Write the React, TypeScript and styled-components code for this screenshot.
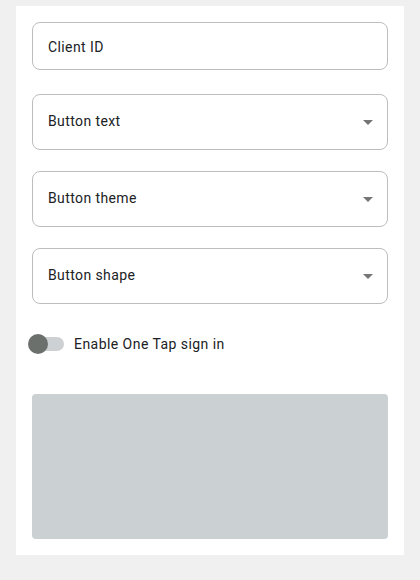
import React from "react";
import styled, { createGlobalStyle } from "styled-components";

const Global = createGlobalStyle`
  html, body { margin: 0; padding: 0; background: #f0f0f0; }
  body { font-family: Roboto, "Noto Sans", Arial, sans-serif; }
`;

const Page = styled.div`
  padding: 6px 16px 0 16px;
`;

const Panel = styled.div`
  background: #ffffff;
  padding: 16px;
  display: flex;
  flex-direction: column;
`;

const Field = styled.div<{ $h: number; $mt: number }>`
  box-sizing: border-box;
  height: ${(p) => p.$h}px;
  margin-top: ${(p) => p.$mt}px;
  border: 1px solid #bdbdbd;
  border-radius: 8px;
  display: flex;
  align-items: center;
  padding: 0 15px;
  font-size: 14px;
  color: #202124;
  letter-spacing: 0.4px;
`;

const Label = styled.span<{ $shift: number }>`
  flex: 1;
  position: relative;
  top: ${(p) => p.$shift}px;
`;

const Arrow = styled.span`
  width: 0;
  height: 0;
  border-left: 5px solid transparent;
  border-right: 5px solid transparent;
  border-top: 5px solid #757575;
  margin-right: -1px;
`;

const ToggleRow = styled.div`
  margin-top: 30px;
  display: flex;
  align-items: center;
  margin-left: -4px;
  height: 20px;
`;

const Switch = styled.div`
  position: relative;
  width: 36px;
  height: 20px;
  display: flex;
  align-items: center;
`;

const Track = styled.div`
  margin-left: 2px;
  width: 34px;
  height: 14px;
  border-radius: 7px;
  background: #cdd1d4;
`;

const Thumb = styled.div`
  position: absolute;
  left: 0;
  top: 0;
  width: 20px;
  height: 20px;
  border-radius: 50%;
  background: #6b706d;
`;

const ToggleText = styled.span`
  margin-left: 10px;
  font-size: 14px;
  color: #202124;
  letter-spacing: 0.45px;
`;

const Preview = styled.div`
  margin-top: 40px;
  height: 145px;
  border-radius: 4px;
  background: #cbd0d3;
`;

const selects = ["Button text", "Button theme", "Button shape"];

export default function App() {
  return (
    <>
      <Global />
      <Page>
        <Panel>
          <Field $h={48} $mt={0}>
            <Label $shift={1}>Client ID</Label>
          </Field>
          {selects.map((s, i) => (
            <Field key={s} $h={56} $mt={i === 0 ? 24 : 21}>
              <Label $shift={-1}>{s}</Label>
              <Arrow />
            </Field>
          ))}
          <ToggleRow>
            <Switch>
              <Track />
              <Thumb />
            </Switch>
            <ToggleText>Enable One Tap sign in</ToggleText>
          </ToggleRow>
          <Preview />
        </Panel>
      </Page>
    </>
  );
}
